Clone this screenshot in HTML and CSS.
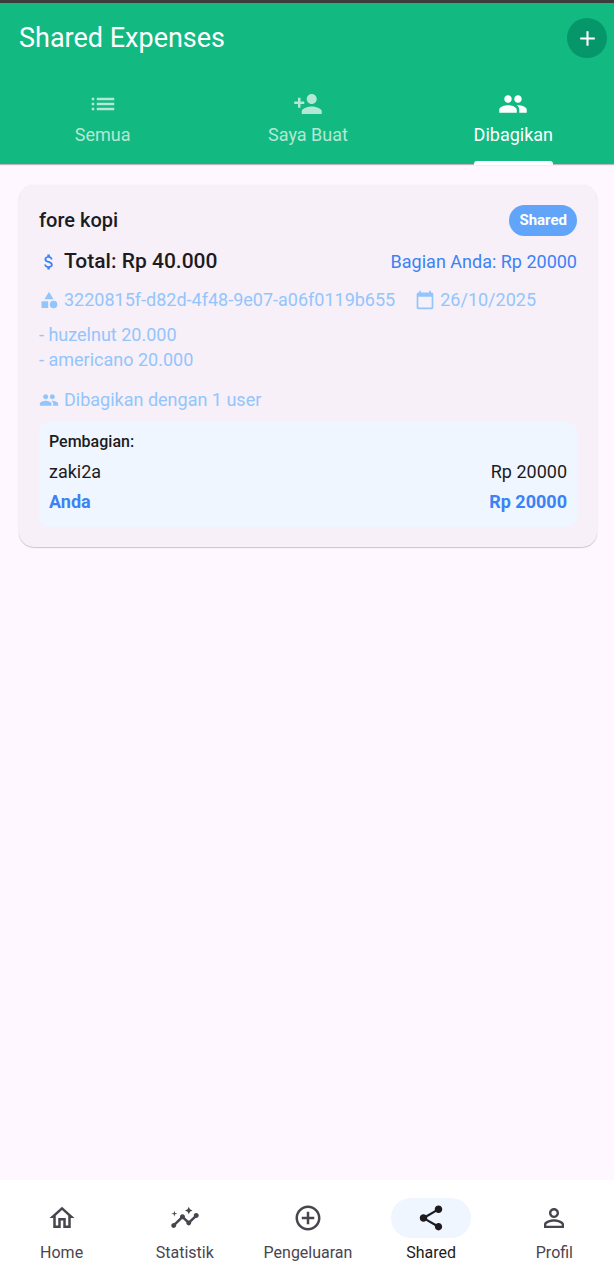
FILE: index.html
```html
<!DOCTYPE html>
<html lang="id">
<head>
<meta charset="utf-8">
<meta name="viewport" content="width=device-width, initial-scale=1">
<title>Shared Expenses</title>
<link rel="stylesheet" href="styles.css">
</head>
<body>
<div class="app">
  <header class="header">
    <div class="bar">
      <h1 class="bar-title">Shared Expenses</h1>
      <button class="add" type="button" aria-label="Tambah">
        <svg class="icon-add" viewBox="0 0 24 24"><path d="M19 13h-6v6h-2v-6H5v-2h6V5h2v6h6z"/></svg>
      </button>
    </div>
    <div class="tabs" role="tablist">
      <button class="tab" type="button" role="tab" aria-selected="false">
        <span class="tab-body">
          <svg class="icon" viewBox="0 0 24 24"><path d="M3 13h2v-2H3v2zm0 4h2v-2H3v2zm0-8h2V7H3v2zm4 4h14v-2H7v2zm0 4h14v-2H7v2zM7 7v2h14V7H7z"/></svg>
          <span>Semua</span>
        </span>
      </button>
      <button class="tab" type="button" role="tab" aria-selected="false">
        <span class="tab-body">
          <svg class="icon" viewBox="0 0 24 24"><path d="M15 12c2.21 0 4-1.79 4-4s-1.79-4-4-4-4 1.79-4 4 1.79 4 4 4zm-9-2V7H4v3H1v2h3v3h2v-3h3v-2H6zm9 4c-2.67 0-8 1.34-8 4v2h16v-2c0-2.66-5.33-4-8-4z"/></svg>
          <span>Saya Buat</span>
        </span>
      </button>
      <button class="tab tab-active" type="button" role="tab" aria-selected="true">
        <span class="tab-body">
          <svg class="icon" viewBox="0 0 24 24"><path d="M16 11c1.66 0 2.99-1.34 2.99-3S17.66 5 16 5s-3 1.34-3 3 1.34 3 3 3zm-8 0c1.66 0 2.99-1.34 2.99-3S9.66 5 8 5 5 6.34 5 8s1.34 3 3 3zm0 2c-2.33 0-7 1.17-7 3.5V19h14v-2.5c0-2.33-4.67-3.5-7-3.5zm8 0c-.29 0-.62.02-.97.05 1.16.84 1.97 1.97 1.97 3.45V19h6v-2.5c0-2.33-4.67-3.5-7-3.5z"/></svg>
          <span>Dibagikan</span>
        </span>
      </button>
    </div>
  </header>

  <main class="content">
    <article class="card">
      <div class="row">
        <h2 class="card-title">fore kopi</h2>
        <span class="badge">Shared</span>
      </div>
      <div class="row total-row">
        <div class="with-icon total">
          <svg class="icon-small" viewBox="0 0 24 24"><path d="M11.8 10.9c-2.27-.59-3-1.2-3-2.15 0-1.09 1.01-1.85 2.7-1.85 1.78 0 2.44.85 2.5 2.1h2.21c-.07-1.72-1.12-3.3-3.21-3.81V3h-3v2.16c-1.94.42-3.5 1.68-3.5 3.61 0 2.31 1.91 3.46 4.7 4.13 2.5.6 3 1.48 3 2.41 0 .69-.49 1.79-2.7 1.79-2.06 0-2.87-.92-2.98-2.1h-2.2c.12 2.19 1.76 3.42 3.68 3.83V21h3v-2.15c1.95-.37 3.5-1.5 3.5-3.55 0-2.84-2.43-3.81-4.7-4.4z"/></svg>
          <span>Total: Rp 40.000</span>
        </div>
        <span class="share">Bagian Anda: Rp 20000</span>
      </div>
      <div class="meta">
        <div class="with-icon">
          <svg class="icon-small" viewBox="0 0 24 24"><path d="M12 2l-5.500 9h11zM3 13.500h8v8H3z"/><circle cx="17.500" cy="17.500" r="4.500"/></svg>
          <span>3220815f-d82d-4f48-9e07-a06f0119b655</span>
        </div>
        <div class="with-icon">
          <svg class="icon-small" viewBox="0 0 24 24"><path d="M20 3h-1V1h-2v2H7V1H5v2H4c-1.100 0-2 .9-2 2v16c0 1.100.9 2 2 2h16c1.100 0 2-.9 2-2V5c0-1.100-.9-2-2-2zm0 18H4V8h16v13z"/></svg>
          <time datetime="2025-10-26">26/10/2025</time>
        </div>
      </div>
      <p class="notes">- huzelnut 20.000<br>- americano 20.000</p>
      <div class="with-icon members">
        <svg class="icon-small" viewBox="0 0 24 24"><path d="M16 11c1.66 0 2.99-1.34 2.99-3S17.66 5 16 5s-3 1.34-3 3 1.34 3 3 3zm-8 0c1.66 0 2.99-1.34 2.99-3S9.66 5 8 5 5 6.34 5 8s1.34 3 3 3zm0 2c-2.33 0-7 1.17-7 3.5V19h14v-2.5c0-2.33-4.67-3.5-7-3.5zm8 0c-.29 0-.62.02-.97.05 1.16.84 1.97 1.97 1.97 3.45V19h6v-2.5c0-2.33-4.67-3.5-7-3.5z"/></svg>
        <span>Dibagikan dengan 1 user</span>
      </div>
      <section class="split">
        <h3 class="split-title">Pembagian:</h3>
        <div class="split-row"><span>zaki2a</span><span>Rp 20000</span></div>
        <div class="split-row split-you"><span>Anda</span><span>Rp 20000</span></div>
      </section>
    </article>
  </main>

  <nav class="nav">
    <a class="nav-item" href="#home">
      <span class="pill"><svg class="icon" viewBox="0 0 24 24"><path d="M12 5.69l5 4.5V18h-2v-6H9v6H7v-7.81l5-4.5M12 3L2 12h3v8h6v-6h2v6h6v-8h3L12 3z"/></svg></span>
      <span>Home</span>
    </a>
    <a class="nav-item" href="#statistik">
      <span class="pill"><svg class="icon" viewBox="0 0 24 24"><path d="M21 8c-1.45 0-2.26 1.44-1.93 2.51l-3.55 3.56c-.3-.09-.74-.09-1.04 0l-2.55-2.55C12.27 10.45 11.46 9 10 9c-1.45 0-2.27 1.44-1.93 2.52l-4.56 4.55C2.44 15.74 1 16.55 1 18c0 1.1.9 2 2 2 1.45 0 2.26-1.44 1.93-2.51l4.55-4.56c.3.09.74.09 1.04 0l2.55 2.55C12.73 16.55 13.54 18 15 18c1.45 0 2.27-1.44 1.93-2.52l3.56-3.55c1.07.33 2.51-.48 2.51-1.93 0-1.1-.9-2-2-2z"/><path d="M15 9l.94-2.07L18 6l-2.06-.93L15 3l-.92 2.07L12 6l2.08.93zM3.5 11L4 9l2-.5L4 8l-.5-2L3 8l-2 .5L3 9z"/></svg></span>
      <span>Statistik</span>
    </a>
    <a class="nav-item" href="#pengeluaran">
      <span class="pill"><svg class="icon" viewBox="0 0 24 24"><path d="M13 7h-2v4H7v2h4v4h2v-4h4v-2h-4V7zm-1-5C6.48 2 2 6.48 2 12s4.48 10 10 10 10-4.48 10-10S17.52 2 12 2zm0 18c-4.41 0-8-3.590-8-8s3.590-8 8-8 8 3.590 8 8-3.590 8-8 8z"/></svg></span>
      <span>Pengeluaran</span>
    </a>
    <a class="nav-item nav-active" href="#shared" aria-current="page">
      <span class="pill"><svg class="icon" viewBox="0 0 24 24"><path d="M18 16.08c-.76 0-1.44.3-1.96.77L8.91 12.7c.05-.23.09-.46.09-.7s-.04-.47-.09-.7l7.05-4.11c.54.5 1.25.81 2.04.81 1.66 0 3-1.34 3-3s-1.34-3-3-3-3 1.34-3 3c0 .24.04.47.09.7L8.04 9.81C7.5 9.31 6.79 9 6 9c-1.66 0-3 1.34-3 3s1.34 3 3 3c.79 0 1.5-.31 2.04-.81l7.12 4.16c-.05.21-.08.43-.08.65 0 1.61 1.31 2.92 2.92 2.92s2.92-1.31 2.92-2.92-1.31-2.92-2.92-2.92z"/></svg></span>
      <span>Shared</span>
    </a>
    <a class="nav-item" href="#profil">
      <span class="pill"><svg class="icon" viewBox="0 0 24 24"><path d="M12 5.9c1.16 0 2.1.94 2.1 2.1s-.94 2.1-2.1 2.1S9.9 9.160 9.900 8s.94-2.100 2.100-2.100m0 9c2.970 0 6.100 1.460 6.100 2.100v1.100H5.900V17c0-.64 3.130-2.100 6.100-2.100M12 4C9.790 4 8 5.790 8 8s1.790 4 4 4 4-1.790 4-4-1.790-4-4-4zm0 9c-2.670 0-8 1.340-8 4v3h16v-3c0-2.660-5.330-4-8-4z"/></svg></span>
      <span>Profil</span>
    </a>
  </nav>
</div>
</body>
</html>
```

FILE: styles.css
```css
* { box-sizing: border-box; }

body {
  margin: 0;
  font-family: Roboto, "Liberation Sans", sans-serif;
  font-size: 18px;
  line-height: 25px;
  color: #1d1b20;
  background: #fef7ff;
}

h1, h2, h3, p { margin: 0; }

svg { display: block; fill: currentColor; flex: none; }
.icon { width: 30px; height: 30px; }
.icon-small { width: 20px; height: 20px; }
.icon-add { width: 25px; height: 25px; }

.app {
  min-height: 100vh;
  display: flex;
  flex-direction: column;
  overflow-x: clip;
}

.header {
  background: #12b981;
  color: #fff;
  border-top: 3px solid #3c3c3c;
  box-shadow: 0 1px 1px #bdb8c0;
}

.bar {
  height: 70px;
  padding: 0 7px 0 19px;
  display: flex;
  align-items: center;
  justify-content: space-between;
}

.bar-title {
  font-size: 27px;
  line-height: 34px;
  font-weight: 400;
}

.add {
  width: 40px;
  height: 40px;
  padding: 0;
  border: 0;
  border-radius: 50%;
  background: #059669;
  color: #fff;
  display: grid;
  place-items: center;
}

.tabs {
  display: grid;
  grid-template-columns: repeat(3, 1fr);
  height: 91px;
  margin-right: -2px;
}

.tab {
  padding: 0;
  border: 0;
  background: none;
  font: inherit;
  color: #b3e8d6;
  display: flex;
  justify-content: center;
}

.tab-body {
  position: relative;
  height: 100%;
  padding-top: 16px;
  display: flex;
  flex-direction: column;
  align-items: center;
  gap: 3px;
}

.tab-active { color: #fff; }
.tab-active .tab-body::after {
  content: "";
  position: absolute;
  left: 0;
  right: 0;
  bottom: -1px;
  height: 4px;
  border-radius: 3px 3px 0 0;
  background: #fff;
}

.content {
  flex: 1;
  padding: 21px 17px 20px 19px;
}

.card {
  padding: 20px;
  border-radius: 15px;
  background: #f7f0f8;
  box-shadow: 0 1px 1px #cbc5cd, 0 0 2px #eee7ef;
}

.row {
  display: flex;
  align-items: center;
  justify-content: space-between;
}

.card-title {
  font-size: 20px;
  font-weight: 500;
}

.badge {
  padding: 3px 10px;
  border-radius: 16px;
  background: #60a5fa;
  color: #fff;
  font-size: 15px;
  font-weight: 700;
}

.total-row { margin-top: 13px; }

.with-icon {
  display: flex;
  align-items: center;
  gap: 5px;
}

.total {
  font-size: 21px;
  font-weight: 500;
}
.total .icon-small { color: #3b82f6; }
.share { color: #3b82f6; }

.meta {
  display: flex;
  flex-wrap: wrap;
  gap: 5px 20px;
  margin-top: 13px;
  color: #93c5fd;
}

.notes {
  margin-top: 10px;
  color: #93c5fd;
}

.members {
  margin-top: 15px;
  color: #93c5fd;
}

.split {
  margin-top: 10px;
  padding: 7px 10px 13px;
  border-radius: 10px;
  background: #eff6ff;
  display: grid;
  gap: 5px;
}

.split-title {
  font-size: 16px;
  line-height: 25px;
  font-weight: 500;
}

.split-row {
  display: flex;
  justify-content: space-between;
}
.split-you { color: #3b82f6; font-weight: 700; }

.nav {
  display: grid;
  grid-template-columns: repeat(5, 1fr);
  height: 96px;
  margin-right: -2px;
  padding-top: 18px;
  background: #fff;
}

.nav-item {
  display: flex;
  flex-direction: column;
  align-items: center;
  gap: 2px;
  color: #49454f;
  font-size: 16px;
  text-decoration: none;
}

.pill {
  width: 80px;
  height: 40px;
  border-radius: 20px;
  display: grid;
  place-items: center;
}

.nav-active { color: #1d1b20; }
.nav-active .pill { background: #eff6ff; }
```
